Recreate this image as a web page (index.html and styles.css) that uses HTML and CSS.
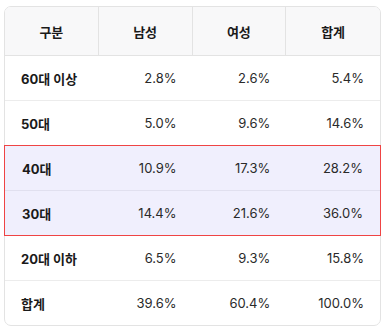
FILE: index.html
```html
<!DOCTYPE html>
<html lang="ko">
<head>
<meta charset="utf-8">
<link rel="stylesheet" href="styles.css">
</head>
<body>
<div class="table">
  <div class="row head">
    <div class="cell">구분</div>
    <div class="cell">남성</div>
    <div class="cell">여성</div>
    <div class="cell">합계</div>
  </div>
  <div class="row">
    <div class="cell label">60대 이상</div>
    <div class="cell num">2.8%</div>
    <div class="cell num">2.6%</div>
    <div class="cell num">5.4%</div>
  </div>
  <div class="row">
    <div class="cell label">50대</div>
    <div class="cell num">5.0%</div>
    <div class="cell num">9.6%</div>
    <div class="cell num">14.6%</div>
  </div>
  <div class="group">
    <div class="row">
      <div class="cell label">40대</div>
      <div class="cell num">10.9%</div>
      <div class="cell num">17.3%</div>
      <div class="cell num">28.2%</div>
    </div>
    <div class="row">
      <div class="cell label">30대</div>
      <div class="cell num">14.4%</div>
      <div class="cell num">21.6%</div>
      <div class="cell num">36.0%</div>
    </div>
  </div>
  <div class="row">
    <div class="cell label">20대 이하</div>
    <div class="cell num">6.5%</div>
    <div class="cell num">9.3%</div>
    <div class="cell num">15.8%</div>
  </div>
  <div class="row">
    <div class="cell label">합계</div>
    <div class="cell num">39.6%</div>
    <div class="cell num">60.4%</div>
    <div class="cell num">100.0%</div>
  </div>
</div>
</body>
</html>
```
FILE: styles.css
```css
* { box-sizing: border-box; }
body {
  margin: 6px 6px 0 4px;
  background: #fff;
  font-family: Inter, "Noto Sans CJK KR", sans-serif;
  font-size: 13px;
  color: #222;
}
.table {
  width: 377px;
  border: 1px solid #e3e3e3;
  border-radius: 7px;
  background: #fff;
}
.row {
  display: grid;
  grid-template-columns: repeat(4, 1fr);
  height: 45px;
  border-bottom: 1px solid #ececec;
  align-items: center;
}
.table > .row:last-child { border-bottom: none; height: 44px; }
.head {
  height: 49px;
  background: #f8f8f9;
  border-bottom: 1px solid #e3e3e3;
  border-radius: 6px 6px 0 0;
  font-weight: 700;
  color: #1a1a1a;
}
.head .cell {
  height: 100%;
  display: flex;
  align-items: center;
  justify-content: center;
  border-right: 1px solid #e3e3e3;
}
.head .cell:last-child { border-right: none; }
.cell { padding: 0 16px; }
.label { font-weight: 700; color: #1a1a1a; }
.num { text-align: right; color: #2a2a2a; }
.group {
  margin: -1px -1px 0 -1px;
  border: 1px solid #ef4444;
  background: #f0effd;
}
.group .row { border-bottom: 1px solid #e1e0ef; height: 45px; }
.group .row:last-child { border-bottom: none; height: 44px; }
.group .row .cell:first-child { padding-left: 17px; }
.group .row .cell:last-child { padding-right: 17px; }
```
